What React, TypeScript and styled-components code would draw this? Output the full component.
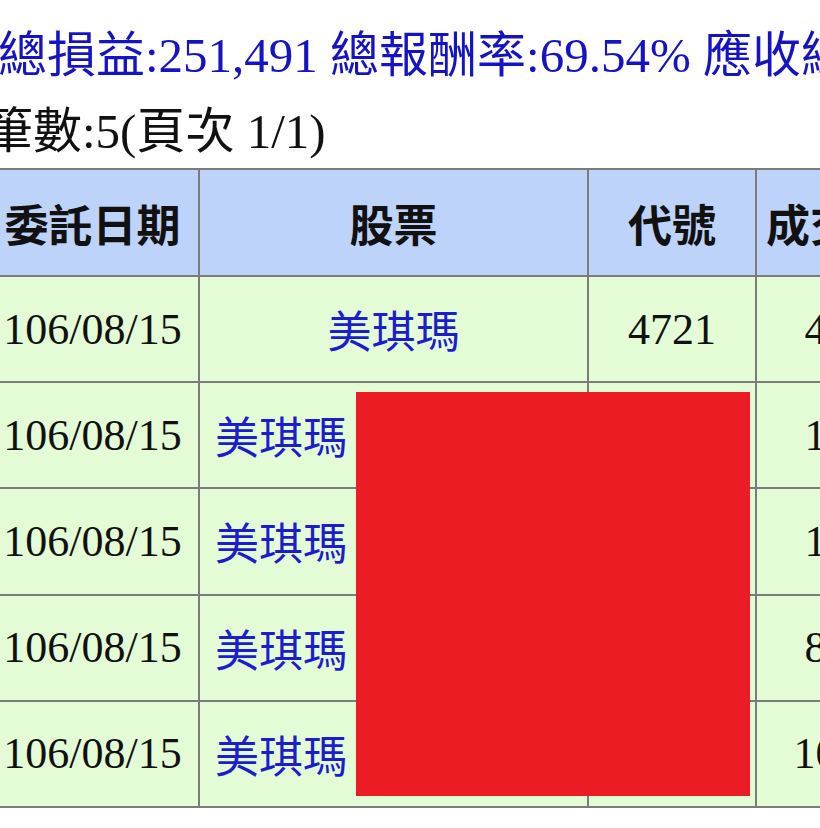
import React from "react";
import styled, { createGlobalStyle } from "styled-components";

const GlobalStyle = createGlobalStyle`
  html, body {
    margin: 0;
    padding: 0;
    background: #ffffff;
  }
  body {
    font-family: "Liberation Serif", "Noto Sans CJK TC", serif;
  }
`;

const Page = styled.div`
  position: relative;
  width: 820px;
  height: 828px;
  overflow: hidden;
  background: #ffffff;
  padding-top: 18px;
  box-sizing: border-box;
`;

const Summary = styled.div`
  display: flex;
  flex-direction: column;
`;

const SummaryLine = styled.div<{ $indent: number; $blue?: boolean }>`
  margin-left: ${(p) => p.$indent}px;
  font-size: 49px;
  line-height: 76px;
  white-space: nowrap;
  color: ${(p) => (p.$blue ? "#1414c6" : "#111111")};
`;

const Table = styled.table`
  margin-top: -2px;
  margin-left: -15px;
  border-collapse: collapse;
  table-layout: fixed;
  width: 966px;
  font-size: 44px;
`;

const HeadCell = styled.th`
  height: 105px;
  padding: 0;
  border: 2px solid #7b7b7b;
  background: #bdd3fa;
  color: #111111;
  font-weight: 700;
  font-family: "Noto Sans CJK TC", sans-serif;
  text-align: center;
  white-space: nowrap;
`;

const Cell = styled.td<{ $align?: "left" | "center" }>`
  height: 104.2px;
  padding: ${(p) => (p.$align === "left" ? "0 0 0 15px" : "0")};
  border: 2px solid #7b7b7b;
  background: #e3fcd5;
  color: #111111;
  text-align: ${(p) => p.$align ?? "center"};
  white-space: nowrap;
  overflow: hidden;
`;

const StockLink = styled.span`
  color: #1c1cd0;
  font-family: "Noto Sans CJK TC", sans-serif;
`;

const Redaction = styled.div`
  position: absolute;
  left: 356px;
  top: 392px;
  width: 394px;
  height: 404px;
  background: #ec1c24;
`;

const rows = [
  { date: "106/08/15", name: "美琪瑪", code: "4721", qty: "4,000", align: "center" as const },
  { date: "106/08/15", name: "美琪瑪", code: "4721", qty: "1,000", align: "left" as const },
  { date: "106/08/15", name: "美琪瑪", code: "4721", qty: "1,000", align: "left" as const },
  { date: "106/08/15", name: "美琪瑪", code: "4721", qty: "8,000", align: "left" as const },
  { date: "106/08/15", name: "美琪瑪", code: "4721", qty: "10,000", align: "left" as const },
];

export default function App() {
  return (
    <>
      <GlobalStyle />
      <Page>
        <Summary>
          <SummaryLine $indent={-2} $blue>
            總損益:251,491 總報酬率:69.54% 應收總額:0
          </SummaryLine>
          <SummaryLine $indent={-16}>筆數:5(頁次 1/1)</SummaryLine>
        </Summary>
        <Table>
          <colgroup>
            <col style={{ width: 213 }} />
            <col style={{ width: 389 }} />
            <col style={{ width: 168 }} />
            <col style={{ width: 196 }} />
          </colgroup>
          <thead>
            <tr>
              <HeadCell>委託日期</HeadCell>
              <HeadCell>股票</HeadCell>
              <HeadCell>代號</HeadCell>
              <HeadCell>成交股數</HeadCell>
            </tr>
          </thead>
          <tbody>
            {rows.map((r, i) => (
              <tr key={i}>
                <Cell>{r.date}</Cell>
                <Cell $align={r.align}>
                  <StockLink>{r.name}</StockLink>
                </Cell>
                <Cell>{r.code}</Cell>
                <Cell>{r.qty}</Cell>
              </tr>
            ))}
          </tbody>
        </Table>
        <Redaction />
      </Page>
    </>
  );
}
